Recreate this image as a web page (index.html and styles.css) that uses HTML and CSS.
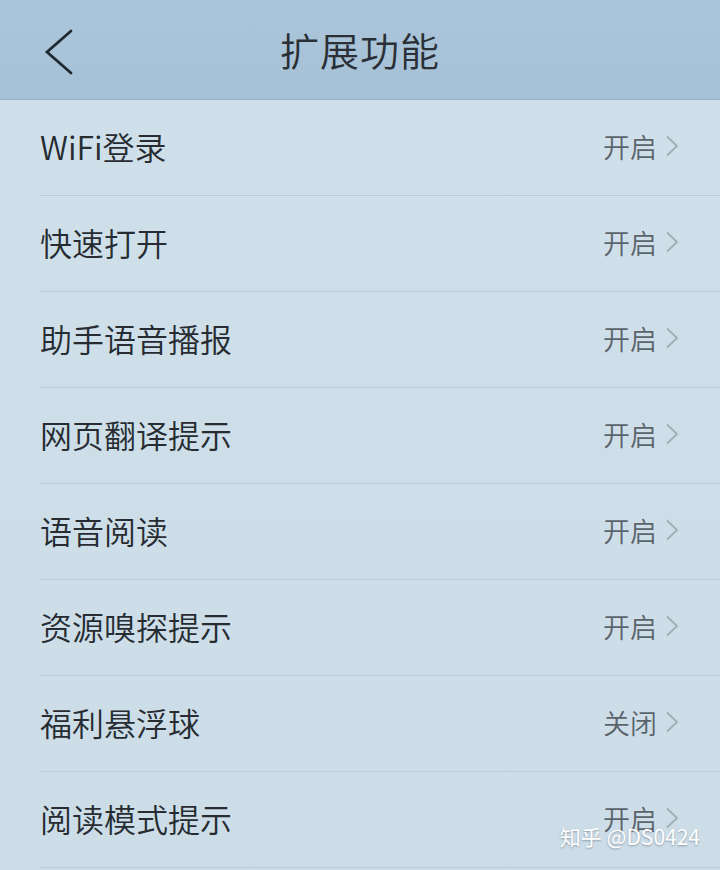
FILE: index.html
```html
<!DOCTYPE html>
<html lang="zh-CN">
<head>
  <meta charset="UTF-8">
  <meta name="viewport" content="width=device-width, initial-scale=1.0">
  <title>扩展功能</title>
  <link rel="stylesheet" href="styles.css">
</head>
<body>
  <div class="screen">
    <header class="top-bar">
      <span class="back">
        <svg width="40" height="50" viewBox="0 0 40 50">
          <path d="M32 6 L8 27 L32 48" fill="none" stroke="#1f2a33" stroke-width="2.8" stroke-linecap="round" stroke-linejoin="miter"/>
        </svg>
      </span>
      <h1 class="title">扩展功能</h1>
    </header>

    <ul class="setting-list">
      <li class="setting-row"><span class="name">WiFi登录</span><span class="state">开启</span><svg class="arrow" width="14" height="22" viewBox="0 0 14 22"><path d="M2 1.5 L12 11 L2 20.5" /></svg></li>
      <li class="setting-row"><span class="name">快速打开</span><span class="state">开启</span><svg class="arrow" width="14" height="22" viewBox="0 0 14 22"><path d="M2 1.5 L12 11 L2 20.5" /></svg></li>
      <li class="setting-row"><span class="name">助手语音播报</span><span class="state">开启</span><svg class="arrow" width="14" height="22" viewBox="0 0 14 22"><path d="M2 1.5 L12 11 L2 20.5" /></svg></li>
      <li class="setting-row"><span class="name">网页翻译提示</span><span class="state">开启</span><svg class="arrow" width="14" height="22" viewBox="0 0 14 22"><path d="M2 1.5 L12 11 L2 20.5" /></svg></li>
      <li class="setting-row"><span class="name">语音阅读</span><span class="state">开启</span><svg class="arrow" width="14" height="22" viewBox="0 0 14 22"><path d="M2 1.5 L12 11 L2 20.5" /></svg></li>
      <li class="setting-row"><span class="name">资源嗅探提示</span><span class="state">开启</span><svg class="arrow" width="14" height="22" viewBox="0 0 14 22"><path d="M2 1.5 L12 11 L2 20.5" /></svg></li>
      <li class="setting-row"><span class="name">福利悬浮球</span><span class="state">关闭</span><svg class="arrow" width="14" height="22" viewBox="0 0 14 22"><path d="M2 1.5 L12 11 L2 20.5" /></svg></li>
      <li class="setting-row"><span class="name">阅读模式提示</span><span class="state">开启</span><svg class="arrow" width="14" height="22" viewBox="0 0 14 22"><path d="M2 1.5 L12 11 L2 20.5" /></svg></li>
    </ul>

    <div class="watermark">知乎 @DS0424</div>
  </div>
</body>
</html>
```

FILE: styles.css
```css
body {
  margin: 0;
  font-family: "Noto Sans CJK SC", "Noto Sans", sans-serif;
  background: #cfdfe9;
}

.screen {
  position: relative;
  width: 720px;
  height: 870px;
  overflow: hidden;
  background: linear-gradient(#d0e0ea, #ccdde8);
}

.top-bar {
  position: relative;
  height: 99px;
  display: flex;
  align-items: center;
  justify-content: center;
  background: linear-gradient(#abc6da, #a6c1d6);
  border-bottom: 1px solid #97b2c6;
}

.back {
  position: absolute;
  left: 39px;
  top: 25px;
  display: flex;
}

.title {
  margin: 0 0 2px;
  font-size: 39px;
  font-weight: 350;
  color: #2a3036;
  letter-spacing: 1px;
}

.setting-list {
  list-style: none;
  margin: 0;
  padding: 0;
}

.setting-row {
  height: 92px;
  margin-left: 40px;
  padding: 0 41px 3px 0;
  display: flex;
  align-items: center;
  border-bottom: 1px solid #b7cbd8;
}

.name {
  flex: 1;
  font-size: 32px;
  font-weight: 350;
  color: #262c31;
}

.state {
  font-size: 27px;
  font-weight: 350;
  color: #5b646b;
  margin-right: 8px;
}

.arrow {
  fill: none;
  stroke: #a2adb5;
  stroke-width: 1.8;
}

.watermark {
  position: absolute;
  right: 20px;
  bottom: 19px;
  font-size: 21px;
  color: #ffffff;
  text-shadow: 0 1px 2px rgba(60, 70, 80, 0.45);
}
```
